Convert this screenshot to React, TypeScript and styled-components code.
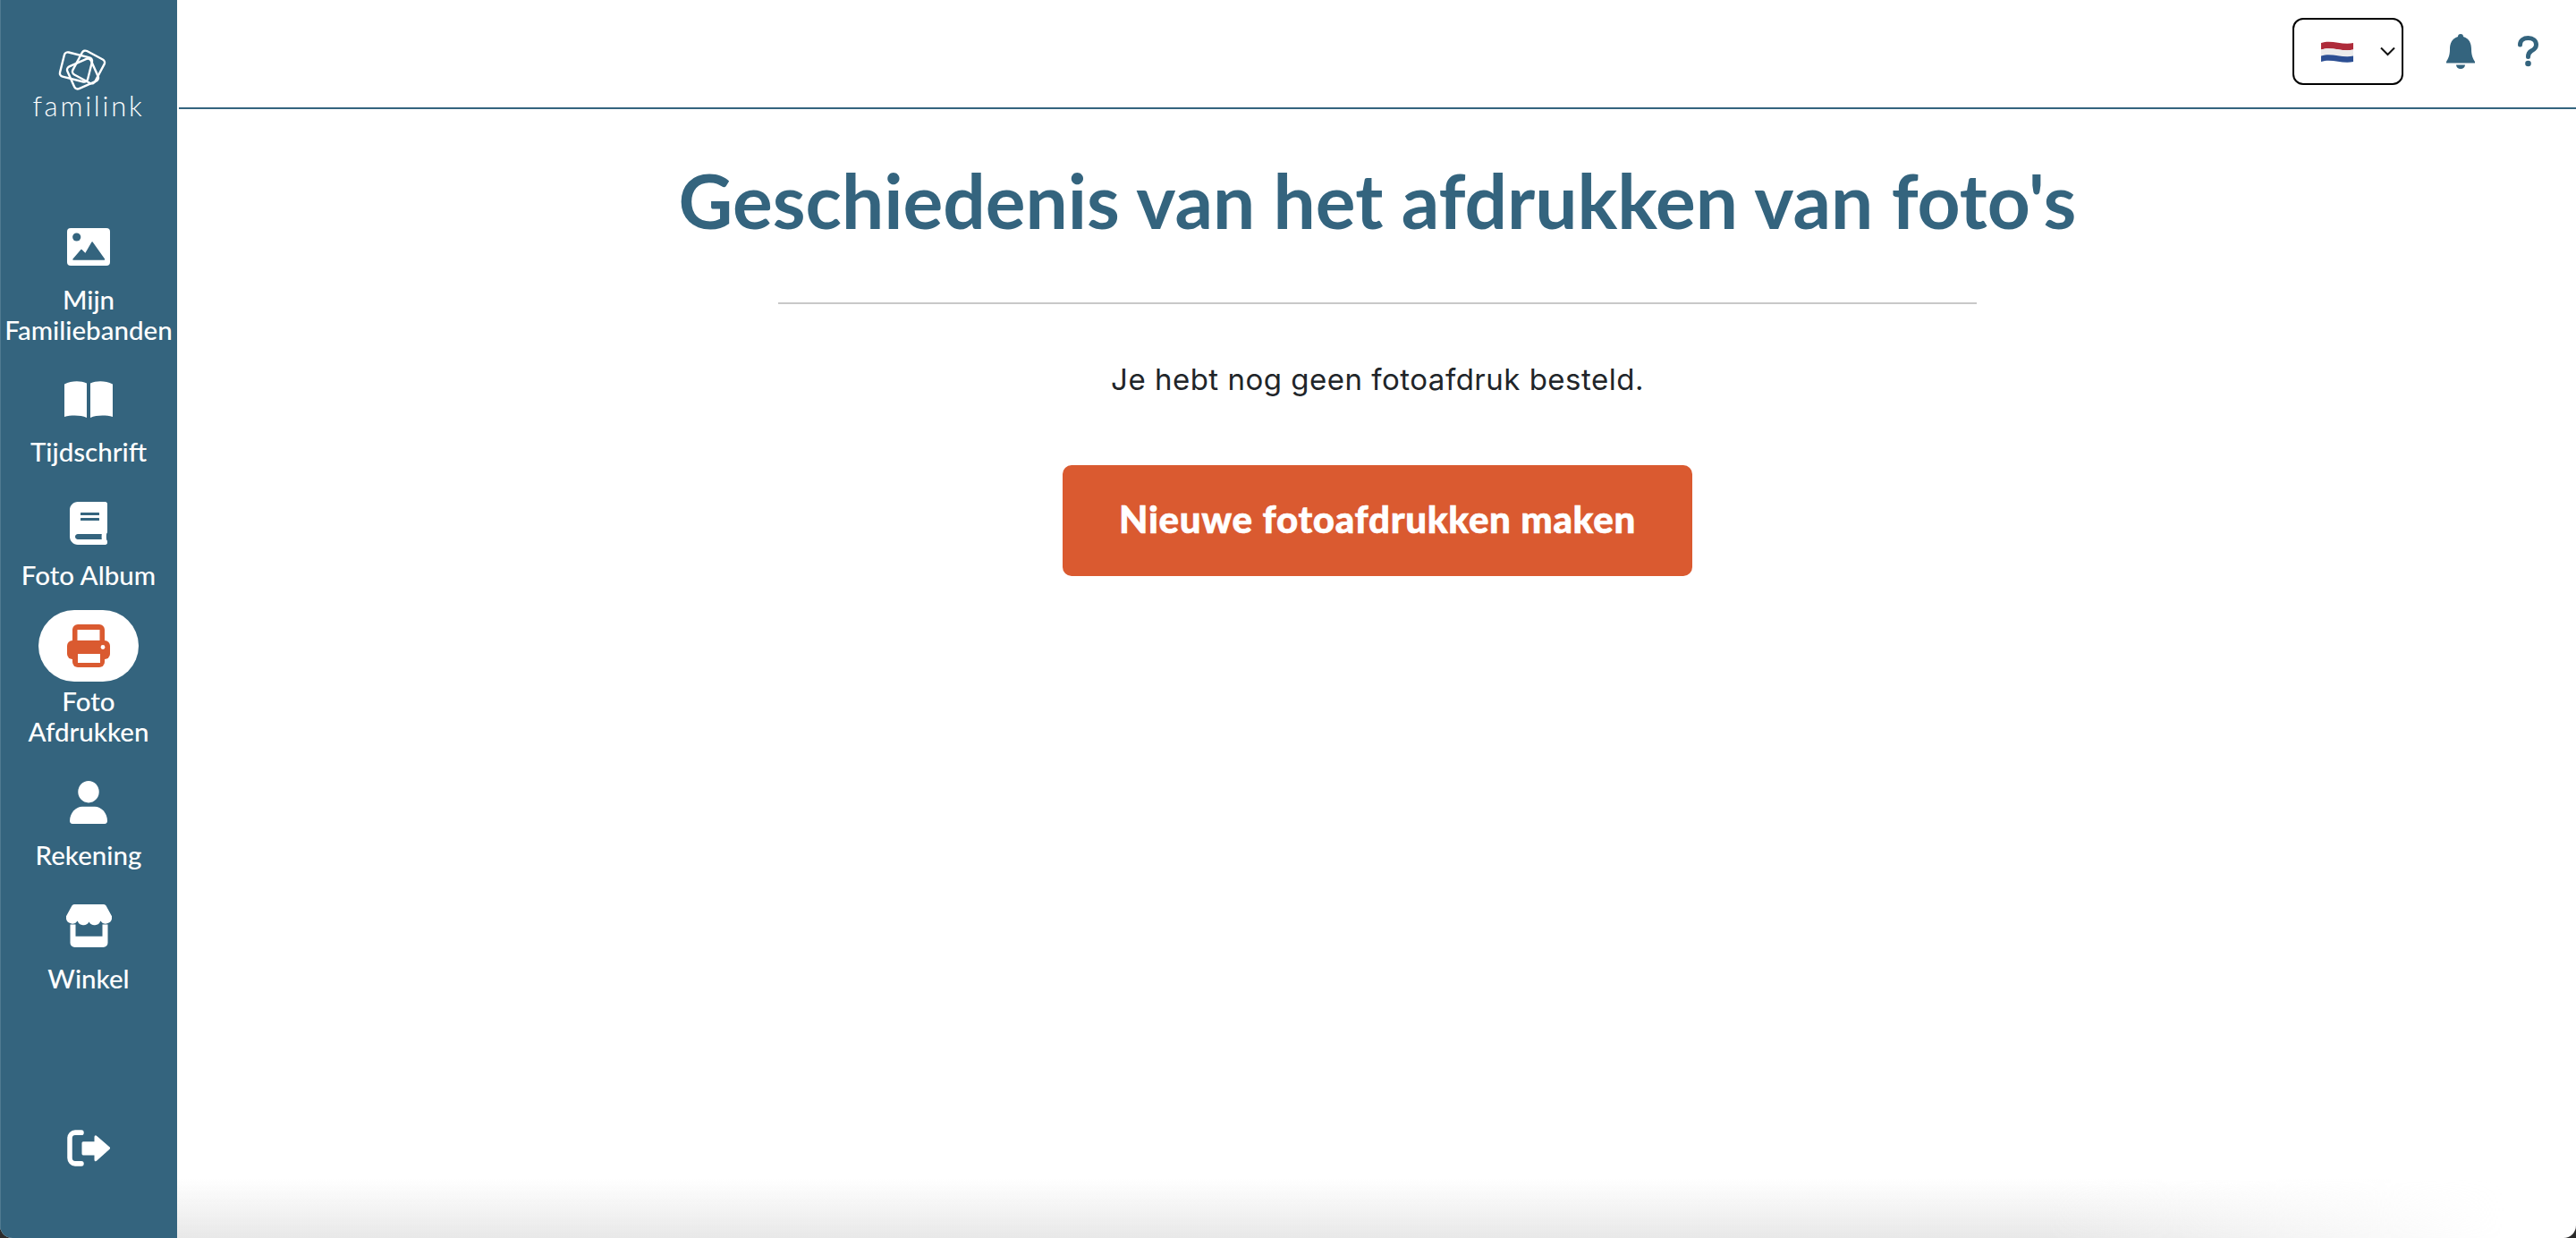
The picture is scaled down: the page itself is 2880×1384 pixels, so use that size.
import React from "react";
import styled, { createGlobalStyle } from "styled-components";
import { FaBook } from "react-icons/fa";

const GlobalStyle = createGlobalStyle`
  html, body {
    margin: 0;
    padding: 0;
    height: 100%;
    background: #2b2b2b;
  }
`;

const Page = styled.div`
  display: flex;
  width: 2880px;
  height: 1384px;
  overflow: hidden;
  background: #ffffff;
  border-radius: 0 0 14px 14px;
  font-family: Lato, "Liberation Sans", sans-serif;
`;

const Sidebar = styled.nav`
  width: 198px;
  flex: none;
  display: flex;
  flex-direction: column;
  align-items: center;
  background: #34647e;
  box-shadow: inset 1px 0 0 #4f7a91;
  color: #ffffff;
  padding-top: 55px;
  box-sizing: border-box;
`;

const Logo = styled.div`
  display: flex;
  flex-direction: column;
  align-items: center;
  height: 181px;
  flex: none;
`;

const LogoMarkWrap = styled.div`
  line-height: 0;
  margin-right: 13px;
`;

const LogoText = styled.span`
  font-size: 31px;
  font-weight: 300;
  letter-spacing: 2.8px;
  line-height: 34px;
`;

const NavList = styled.div`
  display: flex;
  flex-direction: column;
  align-items: center;
  width: 100%;
`;

const NavItem = styled.a<{ $height: number }>`
  display: flex;
  flex-direction: column;
  align-items: center;
  box-sizing: border-box;
  height: ${(p) => p.$height}px;
  width: 100%;
  padding: 0 2px;
  font-size: 29.5px;
  font-weight: 500;
  line-height: 34px;
  text-align: center;
  color: #ffffff;
`;

const IconSlot = styled.div<{ $active?: boolean }>`
  width: 112px;
  height: 80px;
  flex: none;
  display: flex;
  align-items: center;
  justify-content: center;
  border-radius: 40px;
  background: ${(p) => (p.$active ? "#ffffff" : "transparent")};
  color: ${(p) => (p.$active ? "#da5a30" : "#ffffff")};
  font-size: 48px;
`;

const NavLabel = styled.span<{ $gap: number }>`
  margin-top: ${(p) => p.$gap}px;
`;

const Logout = styled.div`
  margin-top: auto;
  margin-bottom: 80px;
  line-height: 0;
`;

const Main = styled.div`
  flex: 1;
  display: flex;
  flex-direction: column;
  min-width: 0;
  padding-left: 2px;
`;

const TopBar = styled.header`
  height: 122px;
  flex: none;
  box-sizing: border-box;
  border-bottom: 2px solid #34647e;
  display: flex;
  align-items: flex-start;
  justify-content: flex-end;
  color: #34647e;
  padding: 20px 42px 0 0;
`;

const LangSelect = styled.div`
  width: 124px;
  height: 75px;
  box-sizing: border-box;
  border: 2.5px solid #000000;
  border-radius: 12px;
  display: flex;
  align-items: center;
  justify-content: space-between;
  padding: 0 7px 0 30px;
`;

const BellButton = styled.div`
  margin: 18px 0 0 48px;
  line-height: 0;
`;

const HelpButton = styled.div`
  margin: 20px 0 0 48px;
  line-height: 0;
`;

const Content = styled.main`
  flex: 1;
  position: relative;
  display: flex;
  flex-direction: column;
  align-items: center;

  &::after {
    content: "";
    position: absolute;
    left: -2px;
    right: 0;
    bottom: 0;
    height: 66px;
    background: linear-gradient(to bottom, rgba(232, 232, 232, 0), #e8e8e8);
    mask-image: linear-gradient(to right, #000 78%, transparent 97%);
  }
`;

const Title = styled.h1`
  margin: 52px 0 0;
  font-size: 83.8px;
  line-height: 100px;
  font-weight: 700;
  color: #34647e;
`;

const Divider = styled.hr`
  width: 1340px;
  height: 2px;
  border: 0;
  margin: 64px 0 0;
  background: #c8c8c8;
`;

const Message = styled.p`
  margin: 62px 0 0;
  font-family: Inter, sans-serif;
  font-size: 33px;
  letter-spacing: 0.5px;
  line-height: 44px;
  color: #212529;
`;

const PrimaryButton = styled.button`
  margin-top: 74px;
  width: 704px;
  height: 124px;
  border: 0;
  border-radius: 10px;
  padding: 0 0 5px;
  background: #da5a30;
  color: #ffffff;
  font-family: Lato, sans-serif;
  font-size: 42px;
  font-weight: 900;
  letter-spacing: 0.7px;
  -webkit-text-stroke: 0.6px #ffffff;
`;

const FamilinkMark = () => (
  <svg width="54" height="46" viewBox="0 0 54 46" fill="none" stroke="#fff" strokeWidth="2.4">
    <rect x="4" y="6" width="32" height="28" rx="4" transform="rotate(14 20 20)" />
    <rect x="20" y="5" width="28" height="30" rx="4" transform="rotate(28 34 20)" />
    <rect x="13" y="14" width="29" height="27" rx="4" transform="rotate(-24 27.500 27.500)" />
  </svg>
);

const ImageIcon = () => (
  <svg width="48" height="42" viewBox="0 0 48 42">
    <rect width="48" height="42" rx="4" fill="currentColor" />
    <circle cx="10.7" cy="10" r="4.6" fill="#34647e" />
    <path
      d="M7 35l9-10.5 4.5 4.5L28 16l13.5 19z"
      fill="#34647e"
      stroke="#34647e"
      strokeWidth="1.5"
      strokeLinejoin="round"
    />
  </svg>
);

const BookOpenIcon = () => (
  <svg width="54" height="41" viewBox="0 0 54 41" fill="currentColor">
    <path d="M0 3.500C8 -.5 18 -.5 25 2.500V41C18 38 8 38 0 40z" />
    <path d="M54 3.500C46 -.5 36 -.5 29 2.500V41C36 38 46 38 54 40z" />
  </svg>
);

const PrinterIcon = () => (
  <svg width="48" height="48" viewBox="0 0 48 48">
    <path d="M6 20V6a6 6 0 0 1 6-6h24a6 6 0 0 1 6 6v14h-5.500V6H11.500v14z" fill="currentColor" />
    <rect y="18" width="48" height="21" rx="6" fill="currentColor" />
    <path d="M6 30h36v12a6 6 0 0 1-6 6H12a6 6 0 0 1-6-6z" fill="currentColor" />
    <rect x="12" y="33" width="25" height="10" fill="#fff" />
    <circle cx="40" cy="25.500" r="2.400" fill="#fff" />
  </svg>
);

const UserIcon = () => (
  <svg width="42" height="48" viewBox="0 0 42 46" preserveAspectRatio="none" fill="currentColor">
    <circle cx="21" cy="11.700" r="11.700" />
    <path d="M0 43c0-9 7-15.500 14-15.500h14C35 27.500 42 34 42 43a3 3 0 0 1-3 3H3a3 3 0 0 1-3-3z" />
  </svg>
);

const StoreIcon = () => (
  <svg width="51" height="48" viewBox="0 0 51 47" preserveAspectRatio="none" fill="currentColor">
    <path d="M9 0h33a3 3 0 0 1 2.600 1.500L51 13a7 7 0 0 1-12.700 5 7 7 0 0 1-12.800 1 7 7 0 0 1-12.800-1A7 7 0 0 1 0 13L6.400 1.500A3 3 0 0 1 9 0z" />
    <path d="M4.500 22h6v13h30V22h6v20a5 5 0 0 1-5 5h-32a5 5 0 0 1-5-5z" />
  </svg>
);

const LogoutIcon = () => (
  <svg width="48" height="41" viewBox="0 0 48 39" preserveAspectRatio="none">
    <path
      d="M16 3H9a6 6 0 0 0-6 6v21a6 6 0 0 0 6 6h7"
      fill="none"
      stroke="currentColor"
      strokeWidth="5.500"
      strokeLinecap="round"
    />
    <path
      d="M18 14h14V7.500L46.500 19.500 32 32v-6.500H18z"
      fill="currentColor"
      stroke="currentColor"
      strokeWidth="3"
      strokeLinejoin="round"
    />
  </svg>
);

const NlFlag = () => (
  <svg width="36" height="26" viewBox="0 0 36 26">
    <path d="M0 3c12-4 24 3 36 0v7.500c-12 3-24-4-36 0z" fill="#ae2b3a" />
    <path d="M0 10.500c12-4 24 3 36 0v7c-12 3-24-4-36 0z" fill="#ececec" />
    <path d="M0 17.500c12-4 24 3 36 0V24c-12 3-24-4-36 0z" fill="#2c4f93" />
  </svg>
);

const Chevron = () => (
  <svg width="17" height="11" viewBox="0 0 17 11" fill="none" stroke="#111" strokeWidth="2">
    <path d="M1 1.500l7.500 7.500L16 1.500" />
  </svg>
);

const BellIcon = () => (
  <svg width="32" height="39" viewBox="0 0 32 39" fill="currentColor">
    <path d="M16 0a3 3 0 0 1 3 3C26 5 28 11 28 17c0 7 2 11 4 14v1.500H0V31c2-3 4-7 4-14C4 11 6 5 13 3a3 3 0 0 1 3-3z" />
    <path d="M11 34.500h10a5 4.500 0 0 1-10 0z" />
  </svg>
);

const QuestionIcon = () => (
  <svg width="23" height="35" viewBox="0 0 23 35">
    <path
      d="M2.500 10C2.500 5 6.500 2.500 11.500 2.500 17 2.500 20.500 5.500 20.500 10 20.500 14 18 15.500 15 17 12.500 18.500 11.500 20 11.500 23.500"
      fill="none"
      stroke="currentColor"
      strokeWidth="5"
      strokeLinecap="round"
    />
    <circle cx="11.500" cy="31" r="3.300" fill="currentColor" />
  </svg>
);

const navItems = [
  { label: "Mijn Familiebanden", icon: <ImageIcon />, height: 170, gap: 2 },
  { label: "Tijdschrift", icon: <BookOpenIcon />, height: 139, gap: 2 },
  { label: "Foto Album", icon: <FaBook />, height: 137, gap: 1 },
  { label: "Foto Afdrukken", icon: <PrinterIcon />, height: 175, gap: 5, active: true },
  { label: "Rekening", icon: <UserIcon />, height: 138, gap: 2 },
  { label: "Winkel", icon: <StoreIcon />, height: 133, gap: 2 },
];

export default function App() {
  return (
    <Page>
      <GlobalStyle />
      <Sidebar>
        <Logo>
          <LogoMarkWrap>
            <FamilinkMark />
          </LogoMarkWrap>
          <LogoText>familink</LogoText>
        </Logo>
        <NavList>
          {navItems.map((item) => (
            <NavItem key={item.label} $height={item.height}>
              <IconSlot $active={item.active}>{item.icon}</IconSlot>
              <NavLabel $gap={item.gap}>{item.label}</NavLabel>
            </NavItem>
          ))}
        </NavList>
        <Logout>
          <LogoutIcon />
        </Logout>
      </Sidebar>
      <Main>
        <TopBar>
          <LangSelect>
            <NlFlag />
            <Chevron />
          </LangSelect>
          <BellButton>
            <BellIcon />
          </BellButton>
          <HelpButton>
            <QuestionIcon />
          </HelpButton>
        </TopBar>
        <Content>
          <Title>Geschiedenis van het afdrukken van foto's</Title>
          <Divider />
          <Message>Je hebt nog geen fotoafdruk besteld.</Message>
          <PrimaryButton>Nieuwe fotoafdrukken maken</PrimaryButton>
        </Content>
      </Main>
    </Page>
  );
}
